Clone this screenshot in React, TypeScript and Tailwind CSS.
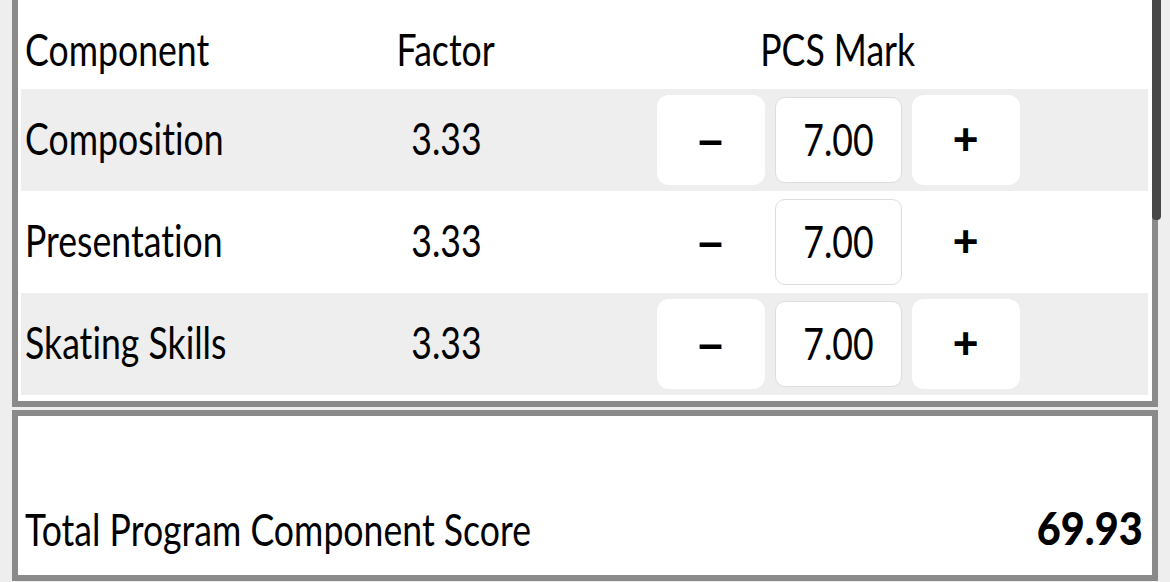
import React, { useState } from 'react';

type Row = { name: string; factor: number; mark: number };

const INITIAL_ROWS: Row[] = [
  { name: 'Composition', factor: 3.33, mark: 7 },
  { name: 'Presentation', factor: 3.33, mark: 7 },
  { name: 'Skating Skills', factor: 3.33, mark: 7 },
];

// condensed look: the reference uses a condensed face, we narrow Lato
const Narrow: React.FC<{ children: React.ReactNode; origin?: 'left' | 'center' | 'right'; wide?: boolean }> = ({
  children,
  origin = 'left',
  wide = false,
}) => {
  const o = origin === 'left' ? 'origin-left' : origin === 'right' ? 'origin-right' : 'origin-center';
  return (
    <span className={`inline-block whitespace-nowrap ${wide ? 'scale-x-[0.9]' : 'scale-x-[0.81]'} ${o}`}>
      {children}
    </span>
  );
};

const App: React.FC = () => {
  const [rows, setRows] = useState<Row[]>(INITIAL_ROWS);

  const step = (index: number, delta: number) => {
    setRows(prev =>
      prev.map((r, i) => (i === index ? { ...r, mark: Math.max(0, Math.min(10, r.mark + delta)) } : r))
    );
  };

  // total = sum of factor * mark
  const total = rows.reduce((sum, r) => sum + r.factor * r.mark, 0);

  return (
    <div className="h-[582px] w-[1170px] overflow-hidden bg-[#eeeeee] px-[12px] text-black font-['Lato',sans-serif] [font-variant-ligatures:none]">
      {/* Components table (scrolled) */}
      <div className="relative h-[407px] border-x-[6px] border-b-[6px] border-[#8a8a8a] bg-white pl-[3px] pr-[4px] pb-[6px]">
        <div className="grid h-[89px] grid-cols-[320px_210px_574px_1fr] items-start pt-[27px] text-[44px] leading-none">
          <div className="pl-[4px]"><Narrow>Component</Narrow></div>
          <div className="text-center"><Narrow origin="center">Factor</Narrow></div>
          <div className="text-center"><Narrow origin="center">PCS Mark</Narrow></div>
          <div />
        </div>

        {rows.map((row, i) => (
          <div
            key={row.name}
            className={`grid h-[102px] grid-cols-[320px_210px_574px_1fr] items-center text-[44px] leading-none ${
              i % 2 === 0 ? 'bg-[#eeeeee]' : 'bg-white'
            }`}
          >
            <div className="pl-[4px] pb-[5px]"><Narrow>{row.name}</Narrow></div>
            <div className="pb-[5px] text-center"><Narrow origin="center">{row.factor.toFixed(2)}</Narrow></div>
            <div className="flex items-center justify-center gap-[10px]">
              <button
                onClick={() => step(i, -0.25)}
                className="flex h-[90px] w-[108px] items-center justify-center rounded-[12px] bg-white font-['Liberation_Sans',sans-serif] text-[44px] font-bold"
              >
                –
              </button>
              <div className="flex h-[86px] w-[127px] items-center justify-center rounded-[10px] border border-[#dddddd] bg-white pb-[2px]">
                <Narrow origin="center">{row.mark.toFixed(2)}</Narrow>
              </div>
              <button
                onClick={() => step(i, 0.25)}
                className="flex h-[90px] w-[108px] items-center justify-center rounded-[12px] bg-white font-['Liberation_Sans',sans-serif] text-[44px] font-bold"
              >
                +
              </button>
            </div>
            <div />
          </div>
        ))}

        {/* scroll indicator */}
        <div className="absolute right-[-9px] top-0 h-[220px] w-[9px] rounded-b-[4px] bg-[#474747]" />
      </div>

      {/* Total */}
      <div className="mt-[3px] flex h-[171px] items-end justify-between border-[6px] border-[#8a8a8a] bg-white pl-[7px] pr-[9px] pb-[24px] text-[44px] leading-none">
        <Narrow>Total Program Component Score</Narrow>
        <span className="text-[46px] font-black">
          <Narrow origin="right" wide>{total.toFixed(2)}</Narrow>
        </span>
      </div>
    </div>
  );
};

export default App;
